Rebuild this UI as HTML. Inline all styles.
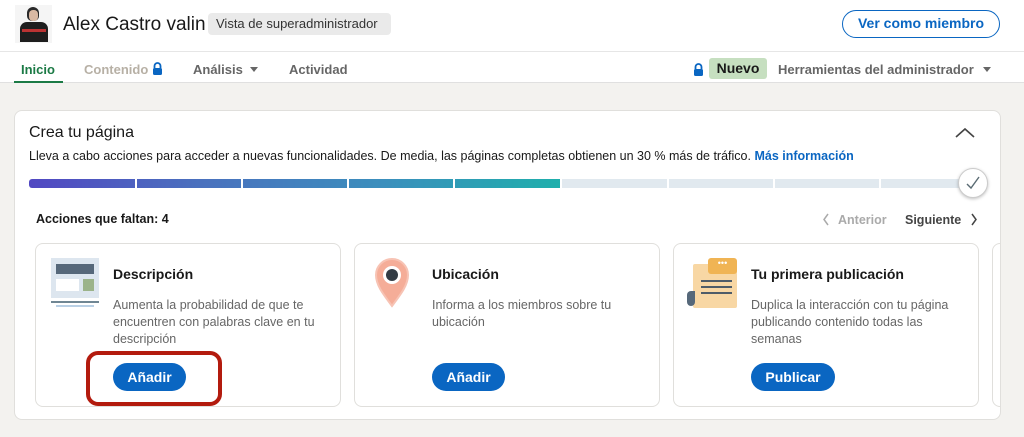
<!DOCTYPE html>
<html><head><meta charset="utf-8"><style>
*{margin:0;padding:0;box-sizing:border-box}
body{width:1024px;height:437px;overflow:hidden;background:#f3f2ef;font-family:"Liberation Sans",sans-serif;position:relative;color:#191919}
.a{position:absolute}
.top{left:0;top:0;width:1024px;height:83px;background:#fff;border-bottom:1px solid #e0e0e0}
.nav{font-size:13px;font-weight:bold;color:#666}
.card{background:#fff;border:1px solid #e0dfdc;border-radius:8px}
.t{font-size:14px;font-weight:bold;color:#191919}
.d{font-size:12.5px;color:#666;line-height:17px}
.btn{background:#0a66c2;color:#fff;font-weight:bold;font-size:14px;border-radius:16px;text-align:center;line-height:28px;height:28px}
.seg{top:179px;height:9px}
</style></head><body>
<div class="a top"></div>
<div class="a" style="left:15px;top:5px;width:37px;height:38px;background:#f5f5f5"></div>
<div class="a" style="left:27px;top:7px;width:12px;height:14px;background:#2a2a2a;border-radius:6px 6px 5px 5px"></div>
<div class="a" style="left:29px;top:10px;width:9px;height:11px;background:#d9b9a3;border-radius:4px"></div>
<div class="a" style="left:20px;top:22px;width:28px;height:20px;background:#1e1e1e;border-radius:7px 7px 0 0"></div>
<div class="a" style="left:22px;top:29px;width:24px;height:3px;background:#b33"></div>
<div class="a" style="left:63px;top:14px;font-size:19px;color:#191919">Alex Castro valin</div>
<div class="a" style="left:208px;top:13px;width:183px;height:22px;background:#eaeaea;border-radius:4px;font-size:13px;line-height:22px;padding-left:8px;color:#333">Vista de superadministrador</div>
<div class="a" style="left:842px;top:10px;width:158px;height:28px;border:1.5px solid #0a66c2;border-radius:15px;color:#0a66c2;font-weight:bold;font-size:14px;text-align:center;line-height:25px">Ver como miembro</div>
<div class="a" style="left:0;top:51px;width:1024px;height:1px;background:#e6e6e6"></div>
<div class="a nav" style="left:21px;top:62px;color:#1b7a45">Inicio</div>
<div class="a" style="left:14px;top:81px;width:49px;height:2px;background:#1b7a45"></div>
<div class="a nav" style="left:84px;top:62px;color:#b7b0a5">Contenido</div>
<svg class="a" style="left:152px;top:62px" width="11" height="13" viewBox="0 0 11 13"><path d="M2.5 6V4a3 3 0 0 1 6 0v2" fill="none" stroke="#0a66c2" stroke-width="1.8"/><rect x="1" y="6" width="9" height="7" rx="1.5" fill="#0a66c2"/></svg>
<div class="a nav" style="left:193px;top:62px">Análisis</div>
<div class="a" style="left:250px;top:67px;border:4px solid transparent;border-top:5px solid #666"></div>
<div class="a nav" style="left:289px;top:62px">Actividad</div>
<svg class="a" style="left:693px;top:63px" width="11" height="13" viewBox="0 0 11 13"><path d="M2.5 6V4a3 3 0 0 1 6 0v2" fill="none" stroke="#0a66c2" stroke-width="1.8"/><rect x="1" y="6" width="9" height="7" rx="1.5" fill="#0a66c2"/></svg>
<div class="a" style="left:709px;top:58px;width:58px;height:21px;background:#c6dfc0;border-radius:3px;font-weight:bold;font-size:14px;text-align:center;line-height:21px">Nuevo</div>
<div class="a nav" style="left:778px;top:62px">Herramientas del administrador</div>
<div class="a" style="left:983px;top:67px;border:4px solid transparent;border-top:5px solid #666"></div>

<div class="a card" style="left:14px;top:110px;width:987px;height:310px;overflow:hidden">
<div class="a card" style="left:977px;top:132px;width:40px;height:164px"></div>
</div>
<div class="a" style="left:29px;top:124px;font-size:16px;color:#191919">Crea tu página</div>
<svg class="a" style="left:955px;top:127px" width="20" height="11"><path d="M1 10L10 2l9 8" fill="none" stroke="#444" stroke-width="1.6"/></svg>
<div class="a" style="left:29px;top:149px;font-size:12.5px;color:#191919">Lleva a cabo acciones para acceder a nuevas funcionalidades. De media, las páginas completas obtienen un 30 % más de tráfico. <b style="color:#0a66c2">Más información</b></div>
<div class="a seg" style="left:29px;width:531px;background:linear-gradient(90deg,#5148c2,#4a72be,#3b8fbd,#1fafac);border-radius:3px 0 0 3px"></div>
<div class="a seg" style="left:560px;width:405px;background:#e1e9ef"></div>
<div class="a" style="top:179px;height:9px;left:135px;width:2px;background:#fff"></div>
<div class="a" style="top:179px;height:9px;left:241px;width:2px;background:#fff"></div>
<div class="a" style="top:179px;height:9px;left:347px;width:2px;background:#fff"></div>
<div class="a" style="top:179px;height:9px;left:453px;width:2px;background:#fff"></div>
<div class="a" style="top:179px;height:9px;left:560px;width:2px;background:#fff"></div>
<div class="a" style="top:179px;height:9px;left:667px;width:2px;background:#fff"></div>
<div class="a" style="top:179px;height:9px;left:773px;width:2px;background:#fff"></div>
<div class="a" style="top:179px;height:9px;left:879px;width:2px;background:#fff"></div>
<div class="a" style="left:958px;top:168px;width:30px;height:30px;border-radius:50%;background:#fff;border:1px solid #ccc;box-shadow:0 1px 3px rgba(0,0,0,.25)"></div>
<svg class="a" style="left:965px;top:175px" width="16" height="16"><path d="M2 9l4 4 8-11" fill="none" stroke="#5a6b73" stroke-width="1.4"/></svg>
<div class="a" style="left:36px;top:212px;font-size:12.5px;font-weight:bold">Acciones que faltan: 4</div>
<svg class="a" style="left:822px;top:213px" width="8" height="13"><path d="M6 1L2 6.5 6 12" fill="none" stroke="#aaa" stroke-width="1.5"/></svg>
<div class="a" style="left:838px;top:213px;font-size:12.5px;font-weight:bold;color:#aaa">Anterior</div>
<div class="a" style="left:905px;top:213px;font-size:12.5px;font-weight:bold;color:#444">Siguiente</div>
<svg class="a" style="left:970px;top:213px" width="8" height="13"><path d="M2 1l4 5.5L2 12" fill="none" stroke="#444" stroke-width="1.5"/></svg>

<div class="a card" style="left:35px;top:243px;width:306px;height:164px"></div>
<div class="a card" style="left:354px;top:243px;width:306px;height:164px"></div>
<div class="a card" style="left:673px;top:243px;width:306px;height:164px"></div>

<div class="a" style="left:51px;top:258px;width:48px;height:40px;background:#dde6ef"></div>
<div class="a" style="left:56px;top:264px;width:38px;height:10px;background:#56687a"></div>
<div class="a" style="left:56px;top:279px;width:23px;height:12px;background:#fff"></div>
<div class="a" style="left:83px;top:279px;width:11px;height:12px;background:#9bb38a"></div>
<div class="a" style="left:51px;top:301px;width:48px;height:2px;background:#6f8693"></div>
<div class="a" style="left:56px;top:305px;width:38px;height:2px;background:#b9d0e5"></div>
<div class="a t" style="left:113px;top:266px">Descripción</div>
<div class="a d" style="left:113px;top:297px;width:220px">Aumenta la probabilidad de que te encuentren con palabras clave en tu descripción</div>
<div class="a btn" style="left:113px;top:363px;width:73px">Añadir</div>
<div class="a" style="left:86px;top:351px;width:136px;height:55px;border:4px solid #b31b0e;border-radius:12px"></div>

<svg class="a" style="left:373px;top:256px" width="38" height="52" viewBox="0 0 38 52"><path d="M19 50C10 38 3 29 3 19a16 16 0 0 1 32 0c0 10-7 19-16 31z" fill="#f5ad98" stroke="#f7c3b4" stroke-width="2"/><circle cx="19" cy="19" r="9" fill="#fff"/><circle cx="19" cy="19" r="6" fill="#333c45"/></svg>
<div class="a t" style="left:432px;top:266px">Ubicación</div>
<div class="a d" style="left:432px;top:297px;width:215px">Informa a los miembros sobre tu ubicación</div>
<div class="a btn" style="left:432px;top:363px;width:73px">Añadir</div>

<div class="a" style="left:693px;top:264px;width:44px;height:44px;background:#f8d7a4;border-radius:2px"></div>
<div class="a" style="left:708px;top:258px;width:29px;height:16px;background:#f0b454;border-radius:3px;color:#fff;font-size:9px;line-height:10px;text-align:center">•••</div>
<div class="a" style="left:701px;top:280px;width:31px;height:2px;background:#4f5c68"></div>
<div class="a" style="left:701px;top:286px;width:31px;height:2px;background:#4f5c68"></div>
<div class="a" style="left:701px;top:292px;width:31px;height:2px;background:#4f5c68"></div>
<div class="a" style="left:687px;top:291px;width:8px;height:15px;background:#56687a;border-radius:4px 0 4px 4px"></div>
<div class="a t" style="left:751px;top:266px">Tu primera publicación</div>
<div class="a d" style="left:751px;top:297px;width:215px">Duplica la interacción con tu página publicando contenido todas las semanas</div>
<div class="a btn" style="left:751px;top:363px;width:84px">Publicar</div>
</body></html>
